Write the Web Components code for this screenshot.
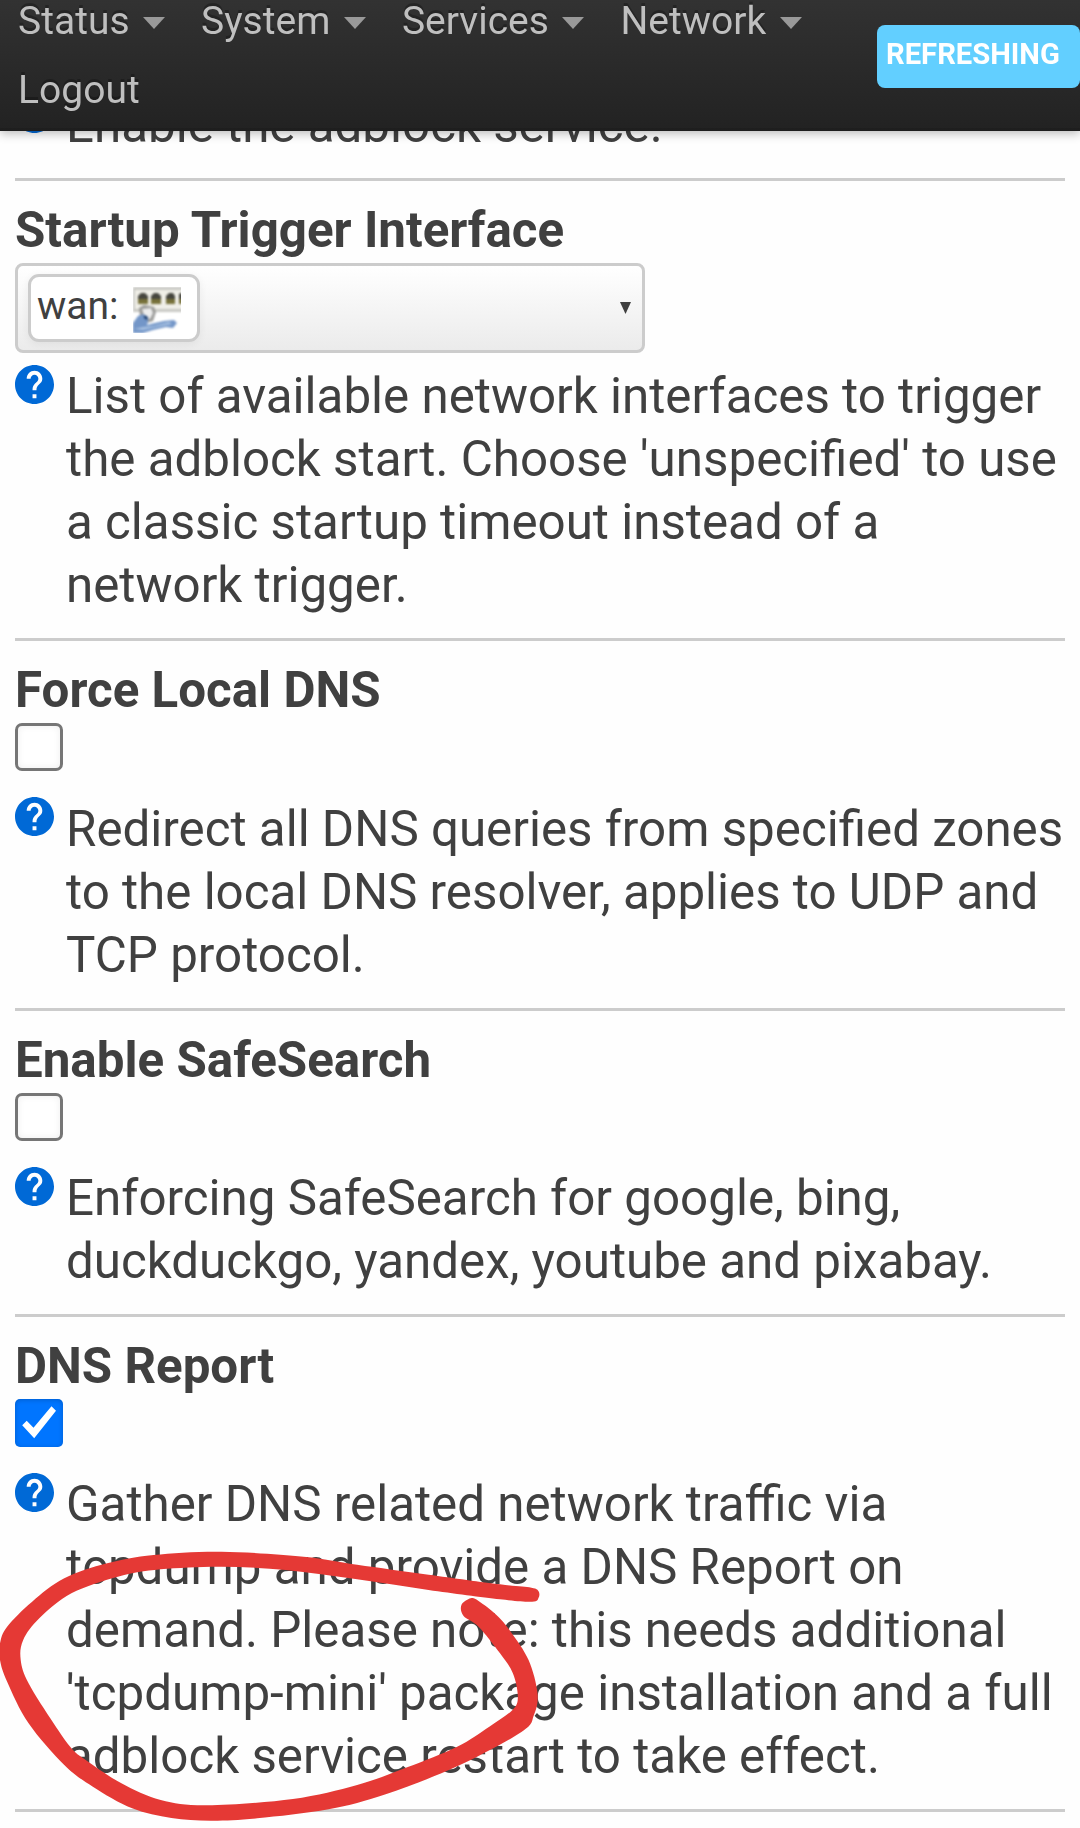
<!DOCTYPE html>
<html lang="en">
<head>
<meta charset="utf-8">
<title>Adblock</title>
<style>
    body {
        margin: 0;
        height: 1828px;
        overflow: hidden;
        background: #fefefe;
        color: #404040;
        font-family: Roboto, "Liberation Sans", sans-serif;
        font-size: 49.3px;
        line-height: 63px;
    }

    main {
        padding: 93.600px 15px 0;
    }
</style>
</head>
<body>
<top-bar>
    <menu-item caret>Status</menu-item>
    <menu-item caret>System</menu-item>
    <menu-item caret>Services</menu-item>
    <menu-item caret>Network</menu-item>
    <menu-item>Logout</menu-item>
    <poll-badge slot="badge">Refreshing</poll-badge>
</top-bar>
<main>
    <option-row>
        <help-text slot="help">Enable the adblock service.</help-text>
    </option-row>
    <option-row name="Startup Trigger Interface">
        <interface-select>wan:</interface-select>
        <help-text slot="help">List of available network interfaces to trigger<br>the adblock start. Choose 'unspecified' to use<br>a classic startup timeout instead of a<br>network trigger.</help-text>
    </option-row>
    <option-row name="Force Local DNS">
        <check-box></check-box>
        <help-text slot="help">Redirect all DNS queries from specified zones<br>to the local DNS resolver, applies to UDP and<br>TCP protocol.</help-text>
    </option-row>
    <option-row name="Enable SafeSearch">
        <check-box></check-box>
        <help-text slot="help">Enforcing SafeSearch for google, bing,<br>duckduckgo, yandex, youtube and pixabay.</help-text>
    </option-row>
    <option-row name="DNS Report">
        <check-box checked></check-box>
        <help-text slot="help">Gather DNS related network traffic via<br>tcpdump and provide a DNS Report on<br>demand. Please note: this needs additional<br>'tcpdump-mini' package installation and a full<br>adblock service restart to take effect.</help-text>
    </option-row>
</main>
<marker-loop></marker-loop>

<script>
function define(name, html, setup) {
    const template = document.createElement('template');
    template.innerHTML = html;
    customElements.define(name, class extends HTMLElement {
        constructor() {
            super();
            this.attachShadow({mode: 'open'});
            this.shadowRoot.appendChild(template.content.cloneNode(true));
            if (setup) setup(this, this.shadowRoot);
        }
    });
}

define('top-bar', `
<style>
    :host {
        /* stays over the scrolled page */
        position: fixed;
        top: 0;
        left: 0;
        right: 0;
        z-index: 2;
        box-sizing: border-box;
        height: 131px;
        display: flex;
        justify-content: space-between;
        background: linear-gradient(#323232, #222);
        box-shadow: 0 3px 9px rgba(0, 0, 0, .25), inset 0 -3px 0 rgba(0, 0, 0, .1);
    }

    nav {
        display: flex;
        flex-wrap: wrap;
        align-content: flex-start;
        column-gap: 36px;
        width: 850px;
        margin-top: -13px;
        padding-left: 18px;
    }
</style>
<nav><slot></slot></nav>
<slot name="badge"></slot>`);

define('menu-item', `
<style>
    :host {
        display: flex;
        align-items: center;
        height: 69px;
        color: #bfbfbf;
        font-size: 39px;
        line-height: 69px;
        text-shadow: 0 -3px 0 rgba(0, 0, 0, .25);
    }

    i {
        display: none;
        margin: 2px 0 0 13.5px;
        border: 11.5px solid transparent;
        border-top: 12px solid #999;
        border-bottom: 0;
    }

    :host([caret]) i {
        display: block;
    }
</style>
<slot></slot><i></i>`);

define('poll-badge', `
<style>
    :host {
        display: block;
        box-sizing: border-box;
        width: 203px;
        height: 63px;
        margin-top: 25px;
        padding-left: 9px;
        border-radius: 8px;
        background: #62cfff;
        color: #fff;
        font-size: 29.2px;
        font-weight: bold;
        line-height: 58px;
        text-transform: uppercase;
        white-space: nowrap;
    }
</style>
<slot></slot>`);

define('option-row', `
<style>
    :host {
        display: block;
        padding-bottom: 20.4px;
    }

    :host([name]) {
        border-top: 3px solid #ccc;
        padding-top: 18px;
    }

    /* closing rule under the last option */
    :host(:last-of-type) {
        border-bottom: 3px solid #ccc;
    }

    .name {
        font-weight: bold;
    }

    .name:empty {
        display: none;
    }
</style>
<div class="name"></div>
<slot></slot>
<slot name="help"></slot>`, (el, root) => {
    root.querySelector('.name').textContent = el.getAttribute('name') || '';
});

define('help-text', `
<style>
    :host {
        display: flex;
        gap: 12px;
        white-space: nowrap;
    }

    svg {
        flex: none;
        width: 39px;
        height: 39px;
    }

    div {
        margin: .4px 0 .6px;
    }
</style>
<svg viewBox="2 2 20 20"><path fill="#0069d6" d="M12 2C6.480 2 2 6.480 2 12s4.480 10 10 10 10-4.480 10-10S17.520 2 12 2zm1 17h-2v-2h2v2zm2.070-7.750l-.9.92C13.450 12.900 13 13.500 13 15h-2v-.5c0-1.100.450-2.100 1.170-2.830l1.240-1.260c.370-.360.590-.860.590-1.410 0-1.100-.9-2-2-2s-2 .9-2 2H8c0-2.210 1.790-4 4-4s4 1.790 4 4c0 .880-.360 1.680-.930 2.250z"/></svg>
<div><slot></slot></div>`);

define('check-box', `
<style>
    :host {
        display: block;
        box-sizing: border-box;
        width: 48px;
        height: 48px;
        margin: 1px 0 26px;
        border: 3px solid #767676;
        border-radius: 7px;
        background: #fff;
        box-shadow: inset 0 0 7px rgba(0, 0, 0, .07);
    }

    :host([checked]) {
        border: 0;
        border-radius: 5px;
        background: #0075ff;
        box-shadow: inset 0 1px 5px rgba(0, 0, 0, .2);
    }

    svg {
        display: none;
    }

    :host([checked]) svg {
        display: block;
    }
</style>
<svg width="48" height="48"><path fill="#fff" d="M7.200 26.300 11.700 21.700 18.500 28.700 36.500 7.300 41 11.700 19.200 39.300z"/></svg>`);

define('interface-select', `
<style>
    :host {
        display: flex;
        align-items: center;
        justify-content: space-between;
        box-sizing: border-box;
        width: 630px;
        height: 90px;
        margin: 1.500px 0 11.500px;
        padding: 0 11px 0 10px;
        border: 3px solid #ccc;
        border-radius: 8px;
        background: linear-gradient(#fff, #ebebeb);
    }

    .chip {
        display: flex;
        align-items: center;
        box-sizing: border-box;
        width: 172px;
        height: 68px;
        padding-left: 6px;
        border: 3px solid #ccc;
        border-radius: 11px;
        background: #fff;
        box-shadow: 0 2px 9px rgba(0, 0, 0, .06);
        font-size: 39px;
        line-height: 56px;
    }

    .text {
        width: 96px;
        padding-bottom: 4px;
    }

    .port {
        margin-top: 4px;
    }

    .port g {
        filter: blur(.8px);
    }
</style>
<div class="chip">
    <span class="text"><slot></slot></span>
    <svg class="port" width="48" height="46" viewBox="0 0 48 46"><g>
        <path fill="#c9c9c4" d="M0 0H50V25H0z"/>
        <path fill="#f0efe8" d="M2 3H50V22H2z"/>
        <path fill="#45453e" d="M5 9 8 6H12L15 9V13H5zM18 9 21 6H25L28 9V13H18zM33 9 36 6H40L42 9V13H33zM46 7 48 6H50V13H46z"/>
        <path fill="#77713a" d="M5 12H15V17H5zM18 12H28V17H18zM33 12H42V17H33zM46 12H50V17H46z"/>
        <path fill="#9a9a98" d="M6 21 11 18 21 20 23 25 20 34 13 36 7 29z"/>
        <path fill="#ededed" d="M9 22 18 21 20 26 17 32 12 31z"/>
        <path fill="#7396c8" d="M5 29 10 27 15 30 15 35 14 38 22 36 31 34 41 33 44 36 40 41 33 40 20 43 10 46 0 46V36z"/>
        <path fill="#a9c2e2" d="M1 42 10 40 21 39 36 35 39 37 23 40 10 43z"/>
        <path fill="#1c3d6c" d="M11 28 15 30 14 33 11 31z"/>
    </g></svg>
</div>
<svg width="11" height="12"><path fill="#404040" d="M0 0H11L5.500 12z"/></svg>`);

// Red pen stroke drawn over the last option
const penOutline = [
    [1488,173],[1400,163],[1200,134],[1000,104],[850,80],[620,65],[430,75],[300,100],[180,145],[90,215],
    [20,290],[0,340],[0,390],[20,455],[80,580],[180,705],[260,770],[370,835],[480,864],[590,872],
    [720,865],[920,838],[1080,793],[1280,709],[1460,606],[1495,555],[1505,490],[1480,390],[1430,305],
    [1390,255],[1340,213],[1318,205],[1292,225],[1298,258],[1340,290],[1400,370],[1436,430],[1450,500],
    [1435,540],[1370,590],[1280,650],[1140,712],[1000,765],[820,807],[580,826],[450,810],[340,760],
    [240,690],[200,655],[150,580],[80,460],[58,390],[65,330],[110,265],[200,190],[330,140],[450,118],
    [620,110],[800,120],[1000,148],[1200,180],[1400,208],[1490,215],[1508,203],[1508,184]
];

function smoothPath(points) {
    const n = points.length;
    let d = 'M' + points[0];
    for (let i = 0; i < n; i++) {
        const [a, b, c, e] = [-1, 0, 1, 2].map(k => points[(i + k + n) % n]);
        d += `C${b[0] + (c[0] - a[0]) / 6},${b[1] + (c[1] - a[1]) / 6}`;
        d += ` ${c[0] - (e[0] - b[0]) / 6},${c[1] - (e[1] - b[1]) / 6} ${c}`;
    }
    return d + 'z';
}

define('marker-loop', `
<style>
    :host {
        position: absolute;
        left: 0;
        top: 1530px;
        z-index: 1;
        width: 560px;
        height: 298px;
    }

    svg {
        display: block;
        width: 100%;
        height: 100%;
    }
</style>
<svg viewBox="0 0 1568 894" preserveAspectRatio="none"><path fill="#e53935"/></svg>`, (el, root) => {
    root.querySelector('path').setAttribute('d', smoothPath(penOutline));
});
</script>
</body>
</html>
